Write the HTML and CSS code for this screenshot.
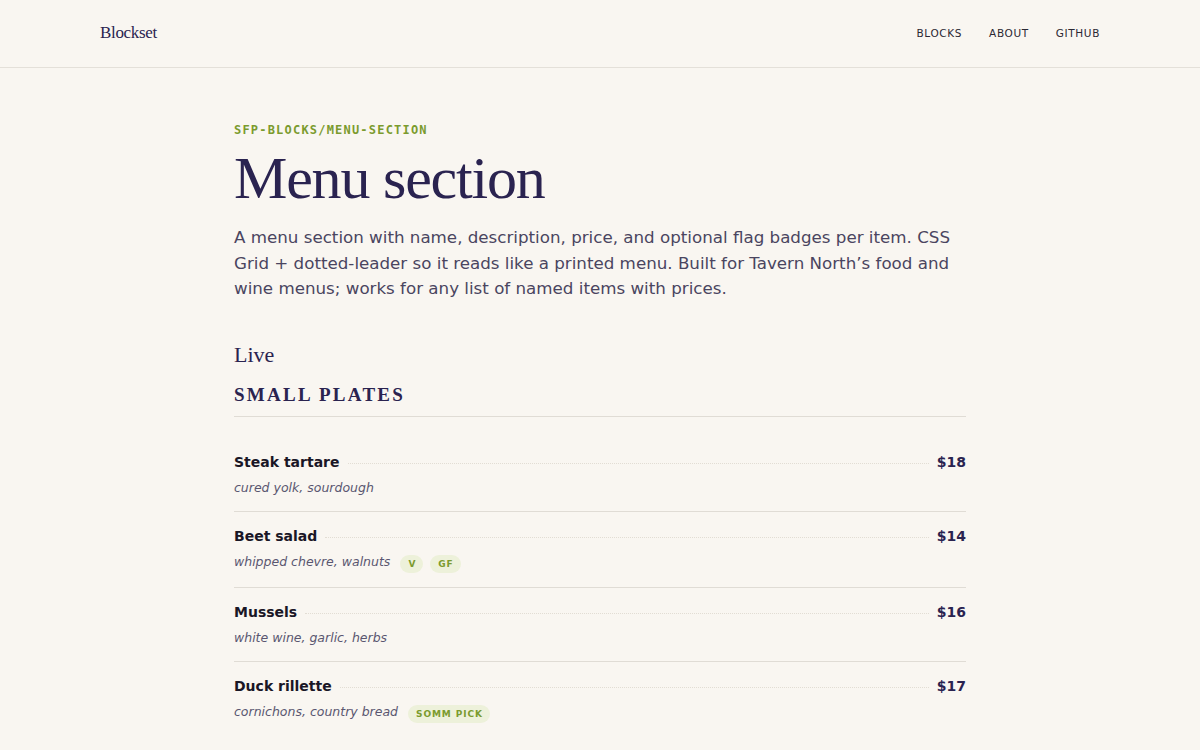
FILE: index.html
```html
<!DOCTYPE html>
<html lang="en">
<head>
<meta charset="utf-8">
<title>Menu section — Blockset</title>
<link rel="stylesheet" href="styles.css">
</head>
<body>
<header class="site-header">
  <a class="logo" href="#">Blockset</a>
  <nav class="nav">
    <a href="#">BLOCKS</a>
    <a href="#">ABOUT</a>
    <a href="#">GITHUB</a>
  </nav>
</header>
<main class="page">
  <div class="eyebrow">SFP-BLOCKS/MENU-SECTION</div>
  <h1 class="title">Menu section</h1>
  <p class="lede">A menu section with name, description, price, and optional flag badges per item. CSS Grid + dotted-leader so it reads like a printed menu. Built for Tavern North’s food and wine menus; works for any list of named items with prices.</p>
  <h2 class="live">Live</h2>
  <section class="menu">
    <h3 class="menu-heading">SMALL PLATES</h3>
    <ul class="items">
      <li class="item">
        <div class="row"><span class="name">Steak tartare</span><span class="leader"></span><span class="price">$18</span></div>
        <div class="desc-row"><span class="desc">cured yolk, sourdough</span></div>
      </li>
      <li class="item">
        <div class="row"><span class="name">Beet salad</span><span class="leader"></span><span class="price">$14</span></div>
        <div class="desc-row has-badges"><span class="desc">whipped chevre, walnuts</span><span class="badge">V</span><span class="badge">GF</span></div>
      </li>
      <li class="item">
        <div class="row"><span class="name">Mussels</span><span class="leader"></span><span class="price">$16</span></div>
        <div class="desc-row"><span class="desc">white wine, garlic, herbs</span></div>
      </li>
      <li class="item">
        <div class="row"><span class="name">Duck rillette</span><span class="leader"></span><span class="price">$17</span></div>
        <div class="desc-row has-badges"><span class="desc">cornichons, country bread</span><span class="badge">SOMM PICK</span></div>
      </li>
    </ul>
  </section>
</main>
</body>
</html>
```
FILE: styles.css
```css
* { box-sizing: border-box; }
html, body { margin: 0; padding: 0; }
body {
  background: #f9f6f1;
  color: #2a2350;
  font-family: "DejaVu Sans", sans-serif;
}
a { text-decoration: none; color: inherit; }

.site-header {
  height: 68px;
  border-bottom: 1px solid #e4e0d9;
  display: flex;
  align-items: center;
  justify-content: space-between;
  padding: 0 100px 2px;
}
.logo {
  font-family: "Liberation Serif", serif;
  font-size: 17px;
  letter-spacing: -0.02em;
  color: #2a2350;
}
.nav {
  display: flex;
  gap: 27px;
}
.nav a {
  font-size: 10.5px;
  letter-spacing: 0.06em;
  color: #2b2833;
}

.page {
  width: 732px;
  margin: 0 auto;
  padding-top: 54px;
}
.eyebrow {
  font-family: "DejaVu Sans Mono", monospace;
  font-weight: bold;
  font-size: 12px;
  line-height: 16px;
  letter-spacing: 0.1em;
  color: #7b9b2e;
}
.title {
  font-family: "Liberation Serif", serif;
  font-weight: normal;
  font-size: 60px;
  line-height: 66px;
  letter-spacing: -0.02em;
  color: #2a2350;
  margin: 7px 0 0;
}
.lede {
  font-size: 16.7px;
  line-height: 25.5px;
  color: #4a4560;
  margin: 14px 0 0;
}
.live {
  font-family: "Liberation Serif", serif;
  font-weight: normal;
  font-size: 22px;
  line-height: 26px;
  color: #2a2350;
  margin: 40px 0 0;
}
.menu-heading {
  font-family: "Liberation Serif", serif;
  font-weight: bold;
  font-size: 19px;
  line-height: 23px;
  letter-spacing: 0.12em;
  color: #2a2350;
  margin: 15px 0 0;
  padding-bottom: 10px;
  border-bottom: 1px solid #e0dcd5;
}
.items {
  list-style: none;
  margin: 21px 0 0;
  padding: 0;
}
.item {
  padding: 14px 0 13px;
  border-bottom: 1px solid #e0dcd5;
}
.item:last-child { border-bottom: none; }
.row {
  display: flex;
  align-items: center;
  gap: 8px;
}
.name {
  font-weight: bold;
  font-size: 14px;
  line-height: 20px;
  color: #1a1626;
}
.leader {
  flex: 1;
  border-top: 1px dotted #e2ddd4;
  margin-top: 3px;
}
.price {
  font-weight: bold;
  font-size: 14px;
  line-height: 20px;
  color: #2a2350;
}
.desc-row {
  display: flex;
  align-items: center;
  margin-top: 6px;
  min-height: 20px;
}
.desc-row.has-badges {
  min-height: 22px;
  align-items: flex-start;
}
.desc {
  font-style: italic;
  font-size: 12.5px;
  line-height: 20px;
  color: #5a5670;
  margin-right: 3px;
}
.badge {
  font-weight: bold;
  font-size: 9px;
  line-height: 12px;
  letter-spacing: 0.1em;
  color: #7b9b2e;
  background: #edf1da;
  border-radius: 10px;
  padding: 3px 7px 3px 8px;
  margin-left: 7px;
  margin-top: 3px;
}
```
